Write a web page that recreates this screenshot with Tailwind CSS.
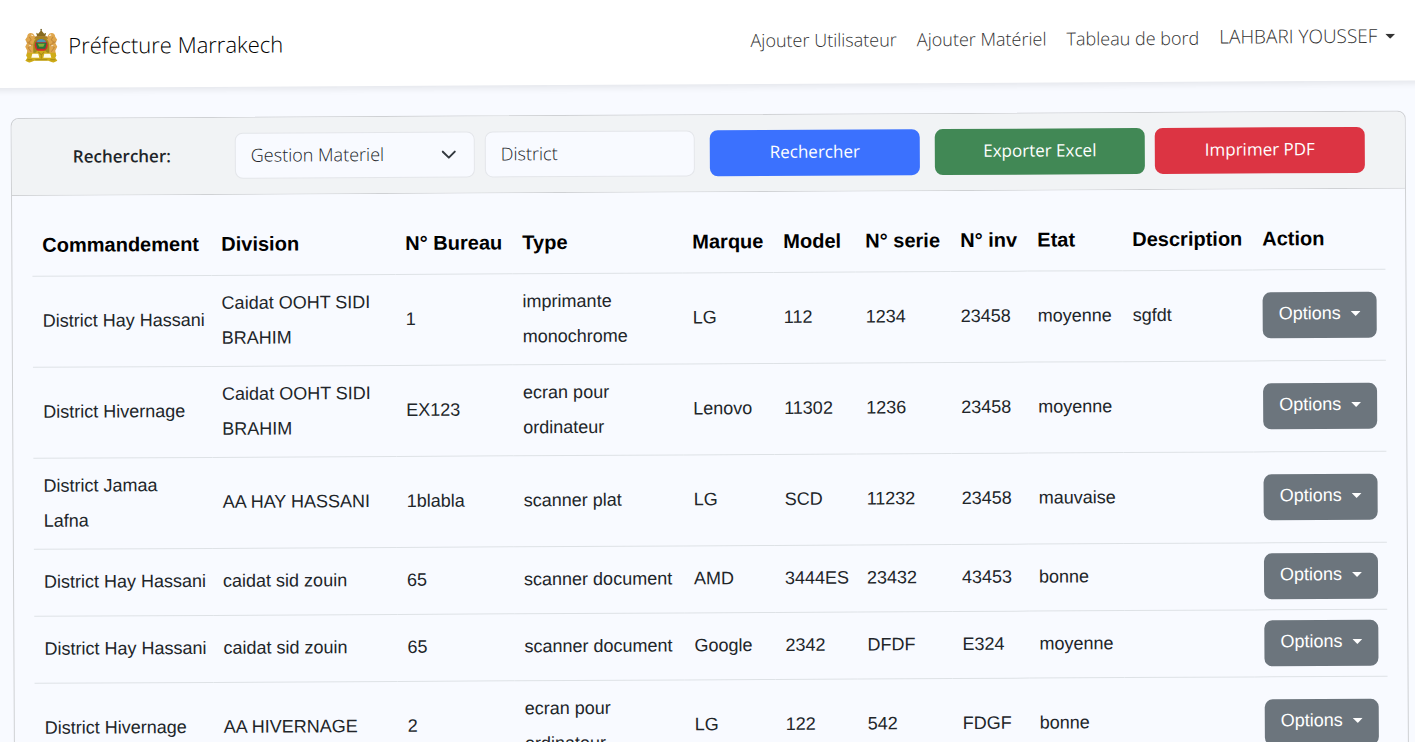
<!DOCTYPE html>
<html lang="fr" class="overflow-hidden bg-[#f8faff]">
<head>
<meta charset="utf-8">
<title>Préfecture Marrakech</title>
<script src="https://cdn.jsdelivr.net/npm/@tailwindcss/browser@4"></script>
</head>
<body class="overflow-hidden bg-[#f8faff]">
<div class="origin-top-left -rotate-[0.3deg] font-['Open_Sans',sans-serif] text-[17px] text-[#212529]">
  <header class="relative -ml-2 -mr-4 flex h-[88px] items-center bg-white pl-8 pr-9 pt-0.5 shadow-[0_3px_6px_rgba(0,0,0,0.08)]">
    <a href="#" class="flex items-center gap-2.5 text-[22px] font-light text-black">
      <svg class="mt-0.5 h-[34px] w-[34px]" viewBox="0 0 34 34" aria-hidden="true">
        <path d="M9 5c-3-2-6 0-6 3l-2 3 2 3-2 4 2 4-1 5h30l-1-5 2-4-2-4 2-3-2-3c0-3-3-5-6-3l-2 3H11z" fill="#dfa64c"/>
        <path d="M5 8l2 3-3 3 4 2-4 3 3 4M29 8l-2 3 3 3-4 2 4 3-3 4M2 13l4 1M32 13l-4 1" fill="none" stroke="#c48a3a"/>
        <path d="M7 6l2 1M27 6l-2 1M5 17l2 0M29 17l-2 0" stroke="#fff3dc" fill="none"/>
        <path d="M16.300 0h1.400v2h-1.400z" fill="#6e5a1c"/>
        <path d="M12 4l2 1 3-3.500L20 5l2-1-1 4h-8z" fill="#866a20"/>
        <path d="M11.500 7.500h11L24 10H10z" fill="#a87a25"/>
        <path d="M17 8.500c6 0 8 4 8 9.500v7H9v-7c0-5.500 2-9.500 8-9.500z" fill="#a08a1c"/>
        <circle cx="17" cy="16.500" r="6.500" fill="#d3262c"/>
        <path d="M12 13.500a5.500 5.500 0 0 1 10 0z" fill="#4b9ab4"/>
        <path d="M11.500 14h11l-1.500 6h-8z" fill="#27763a"/>
        <path d="M13.500 15h7l-1.500 3h-4z" fill="#86ad38"/>
        <path d="M3 24h8l2-2h8l2 2h8l1 3-1 2 2 3-4 2-5-2H10l-5 2-4-2 2-3-1-2z" fill="#cfac18"/>
        <path d="M8 25h6l1 4H7zM20 25h6l1 4h-8z" fill="#fffbe8"/>
        <path d="M14 23l3 3 3-3M3 31h5M26 31h5M11 31h12M17 26v4" fill="none" stroke="#a68a18"/>
      </svg>
      Préfecture Marrakech
    </a>
    <nav class="ml-auto flex items-center gap-5 pb-0.5 text-lg font-light text-[#333]">
      <a href="#">Ajouter Utilisateur</a>
      <a href="#">Ajouter Matériel</a>
      <a href="#">Tableau de bord</a>
      <button type="button" class="flex w-44 items-center justify-between text-[19px]">LAHBARI YOUSSEF
        <svg class="h-[5px] w-[10px]" viewBox="0 0 10 5" fill="currentColor" aria-hidden="true"><path d="M0 0h10L5 5z"/></svg>
      </button>
    </nav>
  </header>

  <main class="mx-2.5 mt-[30px] min-h-[720px] rounded-lg border border-[#cfd1d4]">
    <form class="flex items-center rounded-t-lg border-b border-[#cfd1d4] bg-[#f1f3f5] py-[15px] pr-10">
      <label for="query" class="flex-1 pl-[61px] font-semibold">Rechercher:</label>
      <div class="relative mr-2.5 w-[240px]">
        <select aria-label="Gestion" class="h-[46px] w-full appearance-none rounded-lg border border-[#e4e6ea] bg-[#f8faff] px-[15px] pb-0.5 text-lg font-light text-[#212529]">
          <option>Gestion Materiel</option>
        </select>
        <svg class="pointer-events-none absolute right-[18px] top-[15px] h-4 w-4" viewBox="0 0 16 16" fill="none" stroke="#343a40" stroke-width="2" stroke-linecap="round" stroke-linejoin="round" aria-hidden="true"><path d="M2 5l6 6 6-6"/></svg>
      </div>
      <input id="query" type="text" value="District" class="mr-[15px] h-[46px] w-[210px] rounded-lg border border-[#e4e6ea] bg-[#f8faff] px-[15px] pb-0.5 text-lg font-light">
      <button type="submit" class="mr-[15px] h-[46px] w-[210px] rounded-lg bg-[#3b71fe] pb-0.5 text-white">Rechercher</button>
      <button type="button" class="mr-2.5 h-[46px] w-[210px] rounded-lg bg-[#418855] pb-0.5 text-white">Exporter Excel</button>
      <button type="button" class="h-[46px] w-[210px] rounded-lg bg-[#dc3443] pb-0.5 text-white">Imprimer PDF</button>
    </form>

    <div class="px-5 pt-[19px] font-['Liberation_Sans',Arial,sans-serif]">
      <table class="w-full table-fixed text-left text-lg/[35px]">
        <colgroup>
          <col class="w-[179px]"><col class="w-[184px]"><col class="w-[117px]"><col class="w-[170px]"><col class="w-[91px]"><col class="w-[82px]"><col class="w-[95px]"><col class="w-[77px]"><col class="w-[95px]"><col class="w-[130px]"><col class="w-[133px]">
        </colgroup>
        <thead>
          <tr class="h-[61px] border-b border-[#dee2e6] text-xl font-bold text-black *:pl-2.5 *:whitespace-nowrap">
            <th>Commandement</th><th>Division</th><th>N° Bureau</th><th>Type</th><th>Marque</th><th>Model</th><th>N° serie</th><th>N° inv</th><th>Etat</th><th>Description</th><th>Action</th>
          </tr>
        </thead>
        <tbody id="rows"></tbody>
      </table>
    </div>
  </main>
</div>

<template id="options">
  <button type="button" class="flex h-[46px] w-[114px] items-center justify-between rounded-lg bg-[#6c757d] px-4 pb-0.5 text-white">Options
    <svg class="h-[5px] w-[10px]" viewBox="0 0 10 5" fill="currentColor" aria-hidden="true"><path d="M0 0h10L5 5z"/></svg>
  </button>
</template>
<script>
  const data = [
    ["District Hay Hassani", "Caidat OOHT SIDI BRAHIM", "1", "imprimante monochrome", "LG", "112", "1234", "23458", "moyenne", "sgfdt"],
    ["District Hivernage", "Caidat OOHT SIDI BRAHIM", "EX123", "ecran pour ordinateur", "Lenovo", "11302", "1236", "23458", "moyenne", ""],
    ["District Jamaa Lafna", "AA HAY HASSANI", "1blabla", "scanner plat", "LG", "SCD", "11232", "23458", "mauvaise", ""],
    ["District Hay Hassani", "caidat sid zouin", "65", "scanner document", "AMD", "3444ES", "23432", "43453", "bonne", ""],
    ["District Hay Hassani", "caidat sid zouin", "65", "scanner document", "Google", "2342", "DFDF", "E324", "moyenne", ""],
    ["District Hivernage", "AA HIVERNAGE", "2", "ecran pour ordinateur", "LG", "122", "542", "FDGF", "bonne", ""]
  ];
  const body = document.getElementById("rows");
  for (const row of data) {
    const tr = body.insertRow();
    tr.className = "border-b border-[#dee2e6] *:py-2.5 *:pl-2.5 *:pr-1.5 *:align-middle";
    for (const text of row) tr.insertCell().textContent = text;
    tr.insertCell().append(document.getElementById("options").content.cloneNode(true));
  }
</script>
</body>
</html>
